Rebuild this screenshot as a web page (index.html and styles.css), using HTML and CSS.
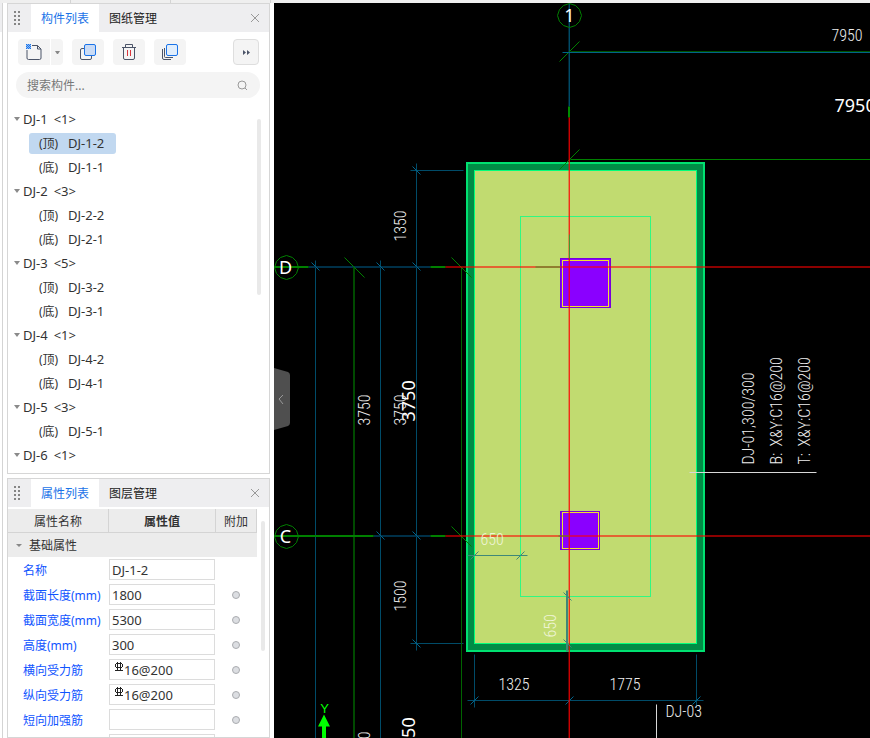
FILE: index.html
```html
<!DOCTYPE html>
<html lang="zh-CN">
<head>
  <meta charset="UTF-8" />
  <meta name="viewport" content="width=device-width, initial-scale=1" />
  <title>构件列表</title>
  <link rel="stylesheet" href="styles.css">
</head>
<body>
  <div class="topbar"><span></span><span></span><span></span></div>

  <div class="workspace">
    <div class="edge"></div>

    <aside class="sidebar">
      <section class="panel components">
        <header class="tabs">
          <svg class="grip" width="7" height="15" viewBox="0 0 7 15"><path d="M1 0v15M5 0v15" stroke="#858585" stroke-width="2" stroke-dasharray="2 2"/></svg>
          <button class="tab active">构件列表</button>
          <button class="tab">图纸管理</button>
          <button class="close" aria-label="关闭"><svg width="10" height="10" viewBox="0 0 10 10"><path d="M1 1l8 8M9 1l-8 8" stroke="#999" fill="none"/></svg></button>
        </header>

        <div class="toolbar">
          <div class="split">
            <button class="tool" aria-label="新建">
              <svg width="18" height="18" viewBox="0 0 18 18" fill="none"><path d="M7 2.500h5.500l3.500 3.500v9q0 1.500-1.500 1.500h-11q-1.500 0-1.500-1.500V7M12.500 2.500v3.500H16" stroke="#4b5468"/><path d="M1 1h5v5H1z" fill="#8fbcf5"/><path d="M1 1.500h5M1 3.500h5M1 5.500h5" stroke="#1a73e8" stroke-dasharray="1 1"/><path d="M2 2.500h4M2 4.500h4" stroke="#1a73e8" stroke-dasharray="1 1"/></svg>
            </button>
            <button class="tool drop" aria-label="更多新建"><svg width="5" height="3" viewBox="0 0 5 3"><path d="M0 0h5L3 3H2z" fill="#888"/></svg></button>
          </div>
          <button class="tool" aria-label="复制">
            <svg width="18" height="18" viewBox="0 0 18 18"><rect x="1.500" y="5.500" width="11" height="11" rx="1.500" fill="none" stroke="#4b5468"/><rect x="5.500" y="1.500" width="11" height="11" rx="1.500" fill="#c9dbf5" stroke="#1a73e8"/></svg>
          </button>
          <button class="tool" aria-label="删除">
            <svg width="18" height="18" viewBox="0 0 18 18" fill="none"><path d="M2 4.500h14M5.500 4V1.500h7V4M3.500 5v10q0 1.500 1.500 1.500h8q1.500 0 1.500-1.500V5" stroke="#4b5468"/><path d="M7.500 7v6M10.500 7v6" stroke="#d9363e"/></svg>
          </button>
          <button class="tool" aria-label="层间复制">
            <svg width="18" height="18" viewBox="0 0 18 18" fill="none"><path d="M1.500 6v9q0 1.500 1.500 1.500h7M3.500 5v8.500q0 1 1 1H12" stroke="#4b5468"/><rect x="5.500" y="1.500" width="11" height="11" rx="1.500" fill="#e1eefc" stroke="#1a73e8"/></svg>
          </button>
          <button class="tool more" aria-label="更多"><svg width="7" height="5" viewBox="0 0 7 5"><path d="M0 0l3 2.500L0 5zM4 0l3 2.500L4 5z" fill="#4b5468"/></svg></button>
        </div>

        <div class="search">
          <input type="text" placeholder="搜索构件..." aria-label="搜索构件">
          <svg width="11" height="11" viewBox="0 0 11 11"><circle cx="5" cy="5" r="4" fill="none" stroke="#999"/><path d="M8 8l2 2" stroke="#999"/></svg>
        </div>

        <div class="tree-wrap">
          <ul class="tree">
            <li class="group"><span>DJ-1</span><span>&lt;1&gt;</span></li>
            <li class="leaf selected"><div><small>(顶)</small><span>DJ-1-2</span></div></li>
            <li class="leaf"><div><small>(底)</small><span>DJ-1-1</span></div></li>
            <li class="group"><span>DJ-2</span><span>&lt;3&gt;</span></li>
            <li class="leaf"><div><small>(顶)</small><span>DJ-2-2</span></div></li>
            <li class="leaf"><div><small>(底)</small><span>DJ-2-1</span></div></li>
            <li class="group"><span>DJ-3</span><span>&lt;5&gt;</span></li>
            <li class="leaf"><div><small>(顶)</small><span>DJ-3-2</span></div></li>
            <li class="leaf"><div><small>(底)</small><span>DJ-3-1</span></div></li>
            <li class="group"><span>DJ-4</span><span>&lt;1&gt;</span></li>
            <li class="leaf"><div><small>(顶)</small><span>DJ-4-2</span></div></li>
            <li class="leaf"><div><small>(底)</small><span>DJ-4-1</span></div></li>
            <li class="group"><span>DJ-5</span><span>&lt;3&gt;</span></li>
            <li class="leaf"><div><small>(底)</small><span>DJ-5-1</span></div></li>
            <li class="group"><span>DJ-6</span><span>&lt;1&gt;</span></li>
          </ul>
          <div class="scrollbar tree-bar"></div>
        </div>
      </section>

      <section class="panel properties">
        <header class="tabs">
          <svg class="grip" width="7" height="15" viewBox="0 0 7 15"><path d="M1 0v15M5 0v15" stroke="#858585" stroke-width="2" stroke-dasharray="2 2"/></svg>
          <button class="tab active">属性列表</button>
          <button class="tab">图层管理</button>
          <button class="close" aria-label="关闭"><svg width="10" height="10" viewBox="0 0 10 10"><path d="M1 1l8 8M9 1l-8 8" stroke="#999" fill="none"/></svg></button>
        </header>

        <div class="props-wrap">
          <table class="props">
            <thead>
              <tr><th class="c-name">属性名称</th><th class="c-value">属性值</th><th class="c-extra">附加</th></tr>
            </thead>
            <tbody>
              <tr class="section"><td colspan="3"><span>基础属性</span></td></tr>
              <tr>
                <td><label for="p1">名称</label></td>
                <td><div class="field"><input id="p1" type="text" value="DJ-1-2"></div></td>
                <td></td>
              </tr>
              <tr>
                <td><label for="p2">截面长度(mm)</label></td>
                <td><div class="field"><input id="p2" type="text" value="1800"></div></td>
                <td><input type="checkbox" aria-label="附加"></td>
              </tr>
              <tr>
                <td><label for="p3">截面宽度(mm)</label></td>
                <td><div class="field"><input id="p3" type="text" value="5300"></div></td>
                <td><input type="checkbox" aria-label="附加"></td>
              </tr>
              <tr>
                <td><label for="p4">高度(mm)</label></td>
                <td><div class="field"><input id="p4" type="text" value="300"></div></td>
                <td><input type="checkbox" aria-label="附加"></td>
              </tr>
              <tr>
                <td><label for="p5">横向受力筋</label></td>
                <td><div class="field rebar"><svg width="10" height="10" viewBox="0 0 10 10"><path d="M2 2.500h6M2 6.500h6M1.500 3v3M8.500 3v3M3.500 1v8M6.500 1v8M1 9.500h8" fill="none" stroke="#222"/></svg><input id="p5" type="text" value="16@200"></div></td>
                <td><input type="checkbox" aria-label="附加"></td>
              </tr>
              <tr>
                <td><label for="p6">纵向受力筋</label></td>
                <td><div class="field rebar"><svg width="10" height="10" viewBox="0 0 10 10"><path d="M2 2.500h6M2 6.500h6M1.500 3v3M8.500 3v3M3.500 1v8M6.500 1v8M1 9.500h8" fill="none" stroke="#222"/></svg><input id="p6" type="text" value="16@200"></div></td>
                <td><input type="checkbox" aria-label="附加"></td>
              </tr>
              <tr>
                <td><label for="p7">短向加强筋</label></td>
                <td><div class="field"><input id="p7" type="text" value=""></div></td>
                <td><input type="checkbox" aria-label="附加"></td>
              </tr>
              <tr>
                <td></td>
                <td><div class="field"><input type="text" value="" aria-label="属性值"></div></td>
                <td></td>
              </tr>
            </tbody>
          </table>
          <div class="scrollbar props-bar"></div>
        </div>
      </section>
    </aside>

    <main class="canvas">
      <svg class="drawing" viewBox="273.500 2.500 596 735" preserveAspectRatio="xMinYMin slice">
        <!-- footing -->
        <rect x="466.500" y="162.500" width="237" height="488" fill="#008c46" stroke="#00e171" stroke-width="2"/>
        <rect x="474" y="170" width="222" height="473" fill="#c1db70" stroke="#00ff7b"/>
        <rect x="520" y="216" width="130" height="380" fill="none" stroke="#30f882"/>

        <!-- dimension lines -->
        <g class="dim">
          <path d="M315 260V738M380 260V738M416 163V650"/>
          <path d="M410 170H463M410 643H463"/>
          <path d="M467 700H703M474 654V707M696 654V707"/>
          <path d="M569 3V106"/>
        </g>
        <path d="M308 266.500H430M373 535.500H430" stroke="#003048" stroke-width="2"/>
        <path d="M568 3V106" stroke="#00222f"/>
        <g class="tick">
          <path d="M311 262l8 8M376 262l8 8M412 262l8 8M376 531l8 8M412 531l8 8M412 166l8 8M412 639l8 8"/>
          <path d="M470 704l8-8M565 704l8-8M692 704l8-8"/>
        </g>

        <!-- axis lines -->
        <g class="axis">
          <path d="M353.500 267V738" stroke="#004a00" stroke-width="2"/>
          <path d="M461 267V738" stroke="#006400"/>
          <path d="M274 266.500H308M274 535.500H373M430 266.500H445M430 535.500H445" stroke-width="2"/>
          <path d="M570 51H870" stroke="#005000"/>
          <path d="M570 159H870"/>
          <path d="M568.500 106V117" stroke="#008c00" stroke-width="2"/>
          <path d="M559 61l20-20M559 169l20-20M344 257l20 20M451 257l20 20M451 526l20 20"/>
        </g>
        <path class="bright" d="M562 52H870"/>

        <!-- columns -->
        <g class="column">
          <rect x="560" y="258" width="50" height="49"/>
          <rect class="inset" x="562" y="260" width="46" height="46"/>
          <rect x="560" y="511" width="39" height="38"/>
          <rect class="inset" x="562" y="512" width="36" height="36"/>
        </g>
        <path d="M445 266.500H870M445 535.500H870" stroke="#ff0000" stroke-opacity=".55" stroke-width="2"/>
        <path d="M568 117V738" stroke="#ff0000" stroke-opacity=".35"/>
        <path d="M569 117V738" stroke="#ff0000" stroke-opacity=".8"/>
        <path d="M535 266.500H560M558 535.500H569M569 234V258" stroke="#3f9a2e" fill="none"/>

        <!-- inner offsets -->
        <g class="offset">
          <path d="M467 555H527M470 559l8-8M516 559l8-8"/>
          <path d="M566.500 590V651" stroke-width="2"/>
          <path d="M563 592l8 8M563 639l8 8"/>
        </g>

        <!-- grid bubbles -->
        <g class="bubble">
          <path d="M569 3l6 2 4 4 2 6-2 6-4 4-6 2-6-2-4-4-2-6 2-6 4-4zM286 255l6 2 4 4 2 6-2 6-4 4-6 2-6-2-4-4-2-6 2-6 4-4zM286 524l6 2 4 4 2 6-2 6-4 4-6 2-6-2-4-4-2-6 2-6 4-4z"/>
        </g>
        <g class="label mid">
          <text x="569" y="21">1</text>
          <text x="285" y="273">D</text>
          <text x="285" y="542">C</text>
        </g>
        <text class="label" x="834" y="111">7950</text>
        <text class="label" transform="translate(414 421) rotate(-90)">3750</text>
        <text class="label" transform="translate(414 758) rotate(-90)">3750</text>

        <g class="cad">
          <text x="831" y="40">7950</text>
          <text x="498" y="689">1325</text>
          <text x="609" y="689">1775</text>
          <text x="665" y="716">DJ-03</text>
          <text class="faded" x="480" y="544">650</text>
          <text class="faded" transform="translate(555 637) rotate(-90)">650</text>
          <text transform="translate(405 241) rotate(-90)">1350</text>
          <text transform="translate(405 611) rotate(-90)">1500</text>
          <text transform="translate(369 425) rotate(-90)">3750</text>
          <text transform="translate(405 425) rotate(-90)">3750</text>
          <text transform="translate(369 762) rotate(-90)">3750</text>
          <text transform="translate(753 464) rotate(-90)">DJ-01,300/300</text>
          <text transform="translate(781 464) rotate(-90)">B:</text>
          <text transform="translate(781 446) rotate(-90)">X&amp;Y:C16@200</text>
          <text transform="translate(809 464) rotate(-90)">T:</text>
          <text transform="translate(809 446) rotate(-90)">X&amp;Y:C16@200</text>
        </g>
        <path d="M689 472H816M656 704V738" stroke="#d8d8d8" fill="none"/>

        <!-- ucs arrow -->
        <path d="M323.500 714l6 12h-4v12h-4v-12h-4z" fill="#00ff00"/>
        <text class="ucs" x="324" y="712">Y</text>
      </svg>
      <button class="collapse" aria-label="收起">
        <svg width="16" height="62" viewBox="0 0 16 62"><path d="M0 0l14 4q2 1 2 3v48q0 2-2 3L0 62z" fill="#4f4f4f"/><path d="M9 27l-4 4 4 5" fill="none" stroke="#999"/></svg>
      </button>
    </main>
  </div>
</body>
</html>
```
FILE: styles.css
```css
* {
  box-sizing: border-box;
}
body {
  margin: 0;
  height: 100vh;
  display: flex;
  flex-direction: column;
  overflow: hidden;
  background-color: white;
  color: #333;
  font-family: "Noto Sans", "Noto Sans CJK SC", sans-serif;
  font-size: 12px;
}
button, input {
  font: inherit;
  color: inherit;
  border: none;
  padding: 0;
  background: none;
}
button {
  cursor: pointer;
}
svg {
  display: block;
}
.topbar {
  display: flex;
  height: 3px;
  flex-shrink: 0;
  padding-left: 1px;
  background-color: #efefef;
}
.topbar span {
  width: 100px;
  border-right: 1px solid #d4d4d4;
}
.topbar span:first-child {
  width: 70px;
}
.workspace {
  flex: 1;
  min-height: 0;
  display: flex;
}
.edge {
  width: 3px;
  border-right: 1px solid #d4d4d4;
  background: linear-gradient(#eeeef0 29px, white 29px);
}
.sidebar {
  width: 271px;
  flex-shrink: 0;
  padding: 0 4px;
  display: flex;
  flex-direction: column;
  gap: 4px;
}
.panel {
  border: 1px solid #d6d6d6;
}
.properties {
  flex: 1;
  min-height: 0;
  overflow: hidden;
}

/* tabs */
.tabs {
  display: flex;
  height: 28px;
  align-items: stretch;
  background-color: #eeeef0;
}
.grip {
  align-self: center;
  margin: 0 10px 0 6px;
}
.tab {
  padding: 0 10px;
  color: #222;
}
.tab.active {
  background-color: white;
  color: #1a73e8;
}
.close {
  margin-left: auto;
  padding: 0 9px;
}

/* toolbar */
.toolbar {
  display: flex;
  gap: 9px;
  padding: 7px 10px;
}
.split {
  display: flex;
  gap: 1px;
}
.tool {
  width: 32px;
  height: 26px;
  display: flex;
  align-items: center;
  justify-content: center;
  border-radius: 4px;
  background-color: #f4f4f4;
}
.tool.drop {
  width: 12px;
}
.split .tool {
  border-radius: 4px 0 0 4px;
}
.split .drop {
  border-radius: 0 4px 4px 0;
}
.tool.more {
  width: 26px;
  margin-left: auto;
  border: 1px solid #dedede;
}
.search {
  display: flex;
  align-items: center;
  height: 26px;
  margin: 0 9px 0 8px;
  padding: 0 12px 0 11px;
  border-radius: 13px;
  background-color: #f4f4f4;
}
.search input {
  flex: 1;
  min-width: 0;
  outline: none;
}
.search input::placeholder {
  color: #777;
}

/* component tree */
.tree-wrap {
  display: flex;
  justify-content: space-between;
  padding: 9px 8px 6px 0;
}
.tree {
  list-style: none;
  margin: 0;
  padding: 0;
}
.tree li {
  display: flex;
  align-items: center;
  height: 24px;
  font-size: 13px;
}
.group {
  gap: 6px;
}
.group::before {
  content: "";
  margin: 0 -3px 0 6px;
  border: 3px solid transparent;
  border-top: 4px solid #8a8a8a;
  border-bottom: none;
}
.leaf div {
  display: flex;
  align-items: center;
  gap: 7px;
  height: 21px;
  margin-left: 21px;
  padding: 0 12px 0 10px;
  border-radius: 3px;
}
.leaf small {
  font-size: 12px;
  width: 22px;
}
.leaf.selected div {
  background-color: #c1d8f0;
}
.scrollbar {
  width: 4px;
  border-radius: 2px;
  background-color: #e9e9e9;
}
.tree-bar {
  height: 176px;
  margin-top: 12px;
}

/* property table */
.props-wrap {
  display: flex;
  justify-content: space-between;
  padding: 2px 4px 0 0;
}
.props {
  width: 249px;
  table-layout: fixed;
  border-collapse: separate;
  border-spacing: 0;
}
.props th {
  height: 24px;
  padding: 0;
  font-weight: normal;
  background-color: #ececec;
  border-right: 1px solid #d4d4d4;
  border-bottom: 1px solid #d4d4d4;
}
.props .c-name {
  width: 101px;
}
.props .c-value {
  width: 107px;
  font-weight: bold;
}
.props td {
  height: 25px;
  padding: 0;
}
.props td:last-child {
  padding-right: 1px;
  text-align: center;
}
.props .section td {
  height: 24px;
  text-align: left;
  background-color: #ececec;
}
.section span {
  display: flex;
  align-items: center;
  gap: 7px;
  padding-left: 8px;
}
.section span::before {
  content: "";
  border: 3px solid transparent;
  border-top-color: #888;
  border-bottom: none;
}
.props label {
  padding-left: 15px;
  color: #1054ff;
  white-space: nowrap;
}
.field {
  display: flex;
  height: 21px;
  width: 106px;
  padding-left: 2px;
  border: 1px solid #dcdcdc;
}
.field input {
  flex: 1;
  min-width: 0;
  outline: none;
  font-size: 13px;
}
.rebar svg {
  margin: 1px 0 0 2px;
}
.props input[type="checkbox"] {
  appearance: none;
  width: 8px;
  height: 8px;
  margin: 0;
  border: 1px solid #aaacb0;
  border-radius: 50%;
  background-color: #dcdee2;
}
.props-bar {
  height: 130px;
  margin-top: 12px;
}

/* drawing area */
.canvas {
  position: relative;
  flex: 1;
  min-width: 0;
  overflow: hidden;
  background-color: black;
}
.drawing {
  width: 100%;
  height: 100%;
}
.dim, .tick, .axis, .column, .offset, .bubble {
  fill: none;
}
.dim {
  stroke: #004b68;
}
.bright {
  stroke: #006488;
}
.tick {
  stroke: #00648c;
}
.axis {
  stroke: #008000;
}
.column rect {
  fill: #8a00ff;
  stroke: #7800d8;
}
.column .inset {
  stroke: #f0e030;
}
.offset {
  stroke: #3f8878;
}
.bubble {
  stroke: #008000;
}
.label {
  fill: white;
  font-family: "Noto Sans", sans-serif;
  font-size: 18px;
}
.mid text {
  text-anchor: middle;
}
.cad {
  fill: #eeeeee;
  font-family: "Roboto Condensed", "Liberation Sans", sans-serif;
  font-size: 16px;
  font-weight: 300;
}
.cad .faded {
  fill: #f0f5d8;
}
.ucs {
  fill: #00ff00;
  font-family: "Liberation Sans", sans-serif;
  font-size: 13px;
  text-anchor: middle;
}
.collapse {
  position: absolute;
  left: 0;
  top: 50%;
  margin-top: -3px;
}
```
